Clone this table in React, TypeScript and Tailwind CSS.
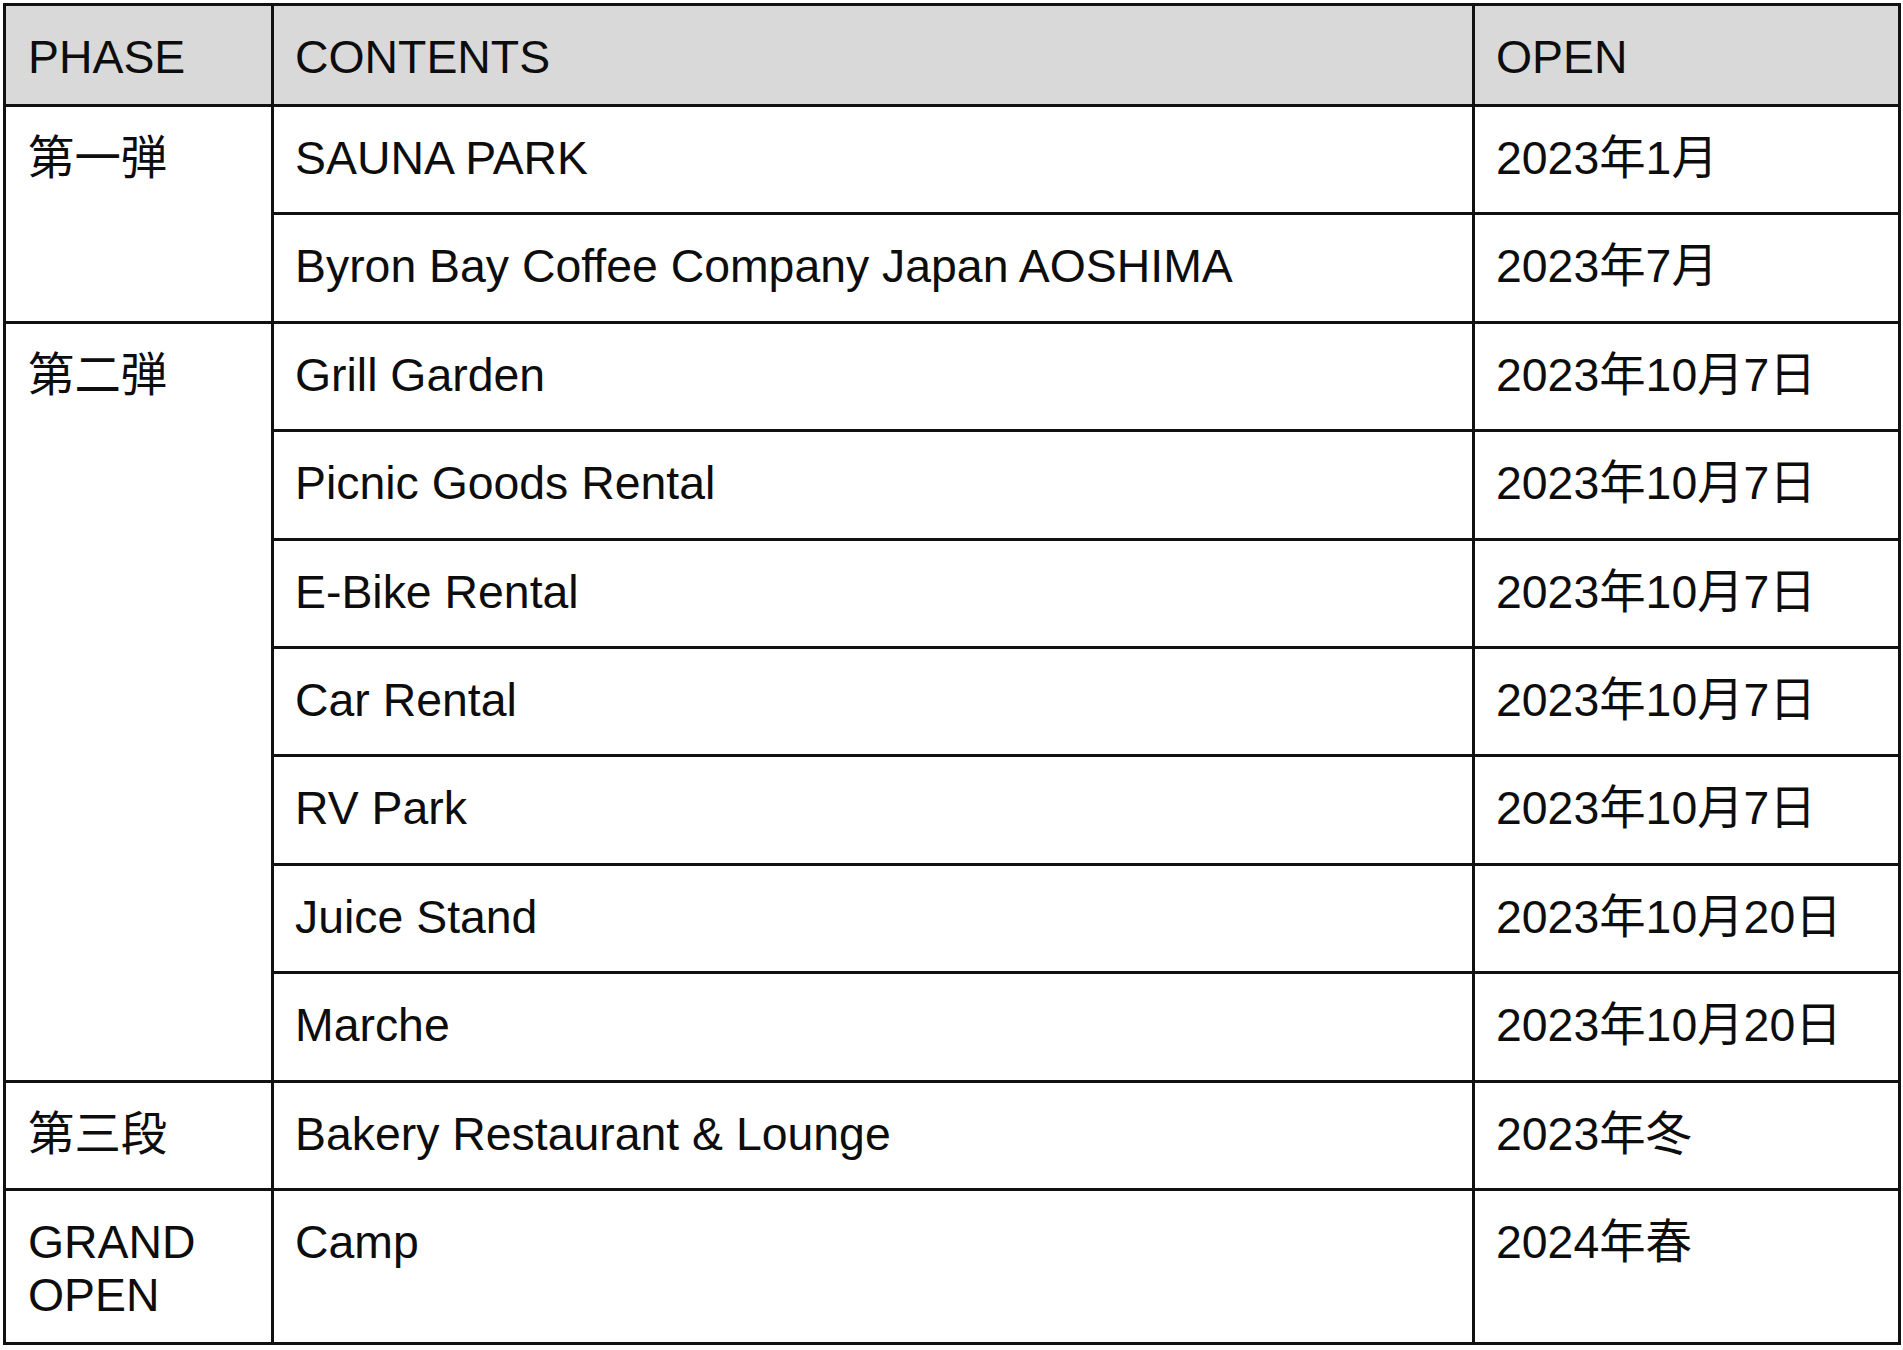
import React from 'react';

type Row = { phase?: string[]; span?: number; content: string; open: string; tall?: boolean };

const rows: Row[] = [
  { phase: ['第一弾'], span: 2, content: 'SAUNA PARK', open: '2023年1月' },
  { content: 'Byron Bay Coffee Company Japan AOSHIMA', open: '2023年7月' },
  { phase: ['第二弾'], span: 7, content: 'Grill Garden', open: '2023年10月7日' },
  { content: 'Picnic Goods Rental', open: '2023年10月7日' },
  { content: 'E-Bike Rental', open: '2023年10月7日' },
  { content: 'Car Rental', open: '2023年10月7日' },
  { content: 'RV Park', open: '2023年10月7日' },
  { content: 'Juice Stand', open: '2023年10月20日' },
  { content: 'Marche', open: '2023年10月20日' },
  { phase: ['第三段'], span: 1, content: 'Bakery Restaurant & Lounge', open: '2023年冬' },
  { phase: ['GRAND', 'OPEN'], span: 1, content: 'Camp', open: '2024年春', tall: true },
];

const cell = 'border-[3px] border-[#111] align-top pt-[25px] pb-0 text-left font-normal';

const App: React.FC = () => {
  return (
    <div
      className="bg-white min-h-screen p-[3px] text-[#0d0d0d] text-[46.4px] leading-[53px]"
      style={{ fontFamily: '"Liberation Sans", "Noto Sans CJK JP", Arial, sans-serif' }}
    >
      <table className="border-collapse table-fixed w-[1895px]">
        <colgroup>
          <col className="w-[268px]" />
          <col className="w-[1201px]" />
          <col className="w-[426px]" />
        </colgroup>
        <thead>
          <tr className="h-[101px] bg-[#d9d9d9]">
            <th className={`${cell} pl-[22px]`}>PHASE</th>
            <th className={`${cell} pl-[21px]`}>CONTENTS</th>
            <th className={`${cell} pl-[21px]`}>OPEN</th>
          </tr>
        </thead>
        <tbody>
          {rows.map((r, i) => (
            <tr key={i} className={r.tall ? 'h-[154px]' : 'h-[108.4px]'}>
              {r.phase && (
                <td rowSpan={r.span} className={`${cell} pl-[22px]`}>
                  {r.phase.map((p) => (
                    <div key={p}>{p}</div>
                  ))}
                </td>
              )}
              <td className={`${cell} pl-[21px]`}>{r.content}</td>
              <td className={`${cell} pl-[21px]`}>{r.open}</td>
            </tr>
          ))}
        </tbody>
      </table>
    </div>
  );
};

export default App;
